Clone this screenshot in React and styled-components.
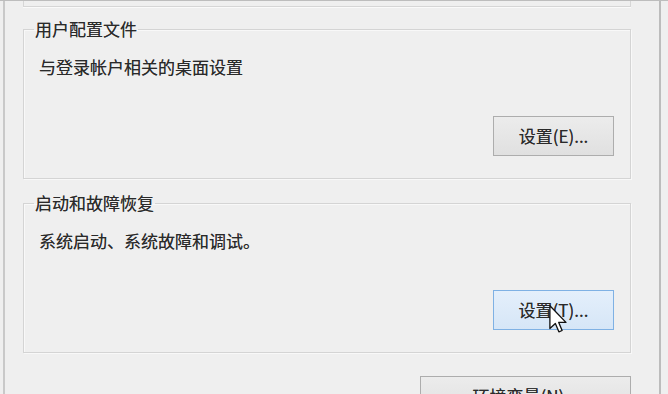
import React from "react";
import styled, { createGlobalStyle, css } from "styled-components";

const GlobalStyle = createGlobalStyle`
  html, body { margin: 0; padding: 0; background: #efefef; }
  body {
    font-family: "Noto Sans CJK SC", "Noto Sans", sans-serif;
    color: #2a2a2a;
  }
`;

const Screen = styled.div`
  width: 668px;
  height: 394px;
  overflow: hidden;
  background: #efefef;
  border-top: 1px solid #bdbdbd;
  box-sizing: border-box;
`;

const TabPanel = styled.div`
  margin-left: 3px;
  width: 658px;
  height: 100%;
  box-sizing: border-box;
  border-left: 2px solid #c9c9c9;
  border-right: 2px solid #bcbcbc;
  padding: 0 28px 0 18px;
`;

const PrevGroupTail = styled.div`
  height: 5px;
  border: 1px solid #d6d6d6;
  border-top: none;
  box-shadow: 0 1px 0 #fafafa;
`;

const Group = styled.fieldset`
  margin: ${(p) => p.$top}px 0 0 0;
  padding: 0 16px 22px 15px;
  border: 1px solid #d4d4d4;
  box-shadow: inset 1px 1px 0 #f8f8f8, 1px 1px 0 #f8f8f8;
  min-width: 0;
`;

const textInk = css`
  color: #2a2a2a;
  text-shadow: 0 0 0.6px rgba(0, 0, 0, 0.55);
`;

const Legend = styled.legend`
  margin-left: -5px;
  padding: 0 1px;
  font-size: 17px;
  line-height: 20px;
  ${textInk};
`;

const Description = styled.p`
  margin: 18px 0 0 0;
  font-size: 17px;
  line-height: 20px;
  ${textInk};
`;

const ButtonRow = styled.div`
  display: flex;
  justify-content: flex-end;
  margin-top: ${(p) => p.$top}px;
`;

const Button = styled.button`
  position: relative;
  width: ${(p) => p.$width}px;
  height: 40px;
  box-sizing: border-box;
  padding: 0;
  font-family: "Noto Sans CJK SC", "Noto Sans", sans-serif;
  font-size: 17px;
  line-height: 20px;
  ${textInk};
  border: 1px solid #adadad;
  background: linear-gradient(#ececec, #e0e0e0);
  ${(p) =>
    p.$hover &&
    css`
      border-color: #7fb1e4;
      background: linear-gradient(#e4effb, #d6e6f7);
    `}
`;

const Cursor = styled.svg`
  position: absolute;
  left: 55px;
  top: 14px;
  width: 18px;
  height: 28px;
  overflow: visible;
`;

const PointerIcon = () => (
  <Cursor viewBox="0 0 12 19">
    <path
      d="M0.5 0.5 L0.5 16 L4.2 12.6 L6.6 18.2 L8.8 17.3 L6.5 11.8 L11.4 11.8 Z"
      fill="#fff"
      stroke="#111"
      strokeWidth="0.9"
      strokeLinejoin="round"
    />
  </Cursor>
);

export default function App() {
  return (
    <>
      <GlobalStyle />
      <Screen>
        <TabPanel>
          <PrevGroupTail />
          <Group $top={12}>
            <Legend>用户配置文件</Legend>
            <Description>与登录帐户相关的桌面设置</Description>
            <ButtonRow $top={39}>
              <Button $width={121}>设置(E)...</Button>
            </ButtonRow>
          </Group>
          <Group $top={14}>
            <Legend>启动和故障恢复</Legend>
            <Description>系统启动、系统故障和调试。</Description>
            <ButtonRow $top={39}>
              <Button $width={121} $hover>
                设置(T)...
                <PointerIcon />
              </Button>
            </ButtonRow>
          </Group>
          <ButtonRow $top={23}>
            <Button $width={211}>环境变量(N)...</Button>
          </ButtonRow>
        </TabPanel>
      </Screen>
    </>
  );
}
